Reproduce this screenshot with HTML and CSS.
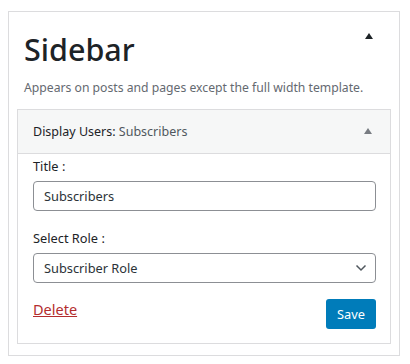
FILE: index.html
```html
<!DOCTYPE html>
<html lang="en">
<head>
    <meta charset="UTF-8">
    <meta name="viewport" content="width=device-width, initial-scale=1.0">
    <title>Sidebar Widgets</title>
    <link rel="stylesheet" href="styles.css">
</head>
<body>
    <div class="sidebar_area">
        <div class="sidebar_head">
            <h2 class="sidebar_title">Sidebar</h2>
            <svg class="toggle_arrow" width="8" height="6" viewBox="0 0 8 6"><path d="M0 6 L4 0 L8 6 Z" fill="#1d2327"/></svg>
        </div>
        <p class="sidebar_desc">Appears on posts and pages except the full width template.</p>

        <div class="widget">
            <div class="widget_top">
                <span class="widget_name">Display Users: <span class="widget_sub">Subscribers</span></span>
                <svg class="widget_arrow" width="8" height="6" viewBox="0 0 8 6"><path d="M0 6 L4 0 L8 6 Z" fill="#787c82"/></svg>
            </div>
            <div class="widget_body">
                <label class="field_label" for="title">Title :</label>
                <input class="field_input" type="text" id="title" value="Subscribers">

                <label class="field_label role_label" for="role">Select Role :</label>
                <div class="select_wrap">
                    <select class="field_input field_select" id="role">
                        <option>Subscriber Role</option>
                    </select>
                    <svg class="chevron" width="12" height="8" viewBox="0 0 12 8"><path d="M1.5 1.5 L6 6 L10.5 1.5" fill="none" stroke="#50575e" stroke-width="1.5"/></svg>
                </div>

                <div class="widget_actions">
                    <a href="#" class="delete_link">Delete</a>
                    <button class="save_btn">Save</button>
                </div>
            </div>
        </div>
    </div>
</body>
</html>
```

FILE: styles.css
```css
body {
    margin: 0;
    font-family: "Noto Sans", "Open Sans", sans-serif;
    background-color: #fff;
    color: #1d2327;
}
.sidebar_area {
    margin: 11px 0 0 8px;
    width: 374px;
    border: 1px solid #dcdcde;
    padding: 0 8px 11px;
}
.sidebar_head {
    display: flex;
    justify-content: space-between;
    padding: 0 18px 0 7px;
}
.sidebar_title {
    margin: 0;
    padding-top: 15px;
    font-size: 30.5px;
    font-weight: 500;
    line-height: 44px;
}
.toggle_arrow {
    margin-top: 21px;
}
.sidebar_desc {
    margin: 7px 0 11px 7px;
    font-size: 12.2px;
    line-height: 20px;
    color: #646970;
}
.widget {
    border: 1px solid #dcdcde;
}
.widget_top {
    display: flex;
    justify-content: space-between;
    align-items: center;
    height: 43px;
    padding: 0 18px 0 15px;
    background-color: #f6f7f7;
    border-bottom: 1px solid #dcdcde;
    font-size: 12.5px;
}
.widget_sub {
    color: #50575e;
}
.widget_arrow {
    margin-top: -1px;
}
.widget_body {
    padding: 2px 14px 14px 15px;
}
.field_label {
    display: block;
    font-size: 12.8px;
    line-height: 20px;
    margin-bottom: 5px;
}
.role_label {
    margin-top: 17px;
}
.field_input {
    display: block;
    box-sizing: border-box;
    width: 100%;
    height: 30px;
    margin: 0;
    padding: 0 10px;
    border: 1px solid #8c8f94;
    border-radius: 4px;
    font-family: inherit;
    font-size: 12.8px;
    color: #2c3338;
    background-color: #fff;
}
.select_wrap {
    position: relative;
}
.field_select {
    appearance: none;
    padding-right: 30px;
}
.chevron {
    position: absolute;
    right: 9px;
    top: 11px;
}
.widget_actions {
    display: flex;
    justify-content: space-between;
    align-items: flex-start;
    margin-top: 14px;
}
.delete_link {
    margin-top: 2px;
    color: #b32d2e;
    font-size: 14.5px;
    line-height: 20px;
}
.save_btn {
    margin-top: 2px;
    height: 30px;
    padding: 0 11px;
    border: none;
    border-radius: 3px;
    background-color: #007cba;
    color: #fff;
    font-family: inherit;
    font-size: 12.8px;
}
```
